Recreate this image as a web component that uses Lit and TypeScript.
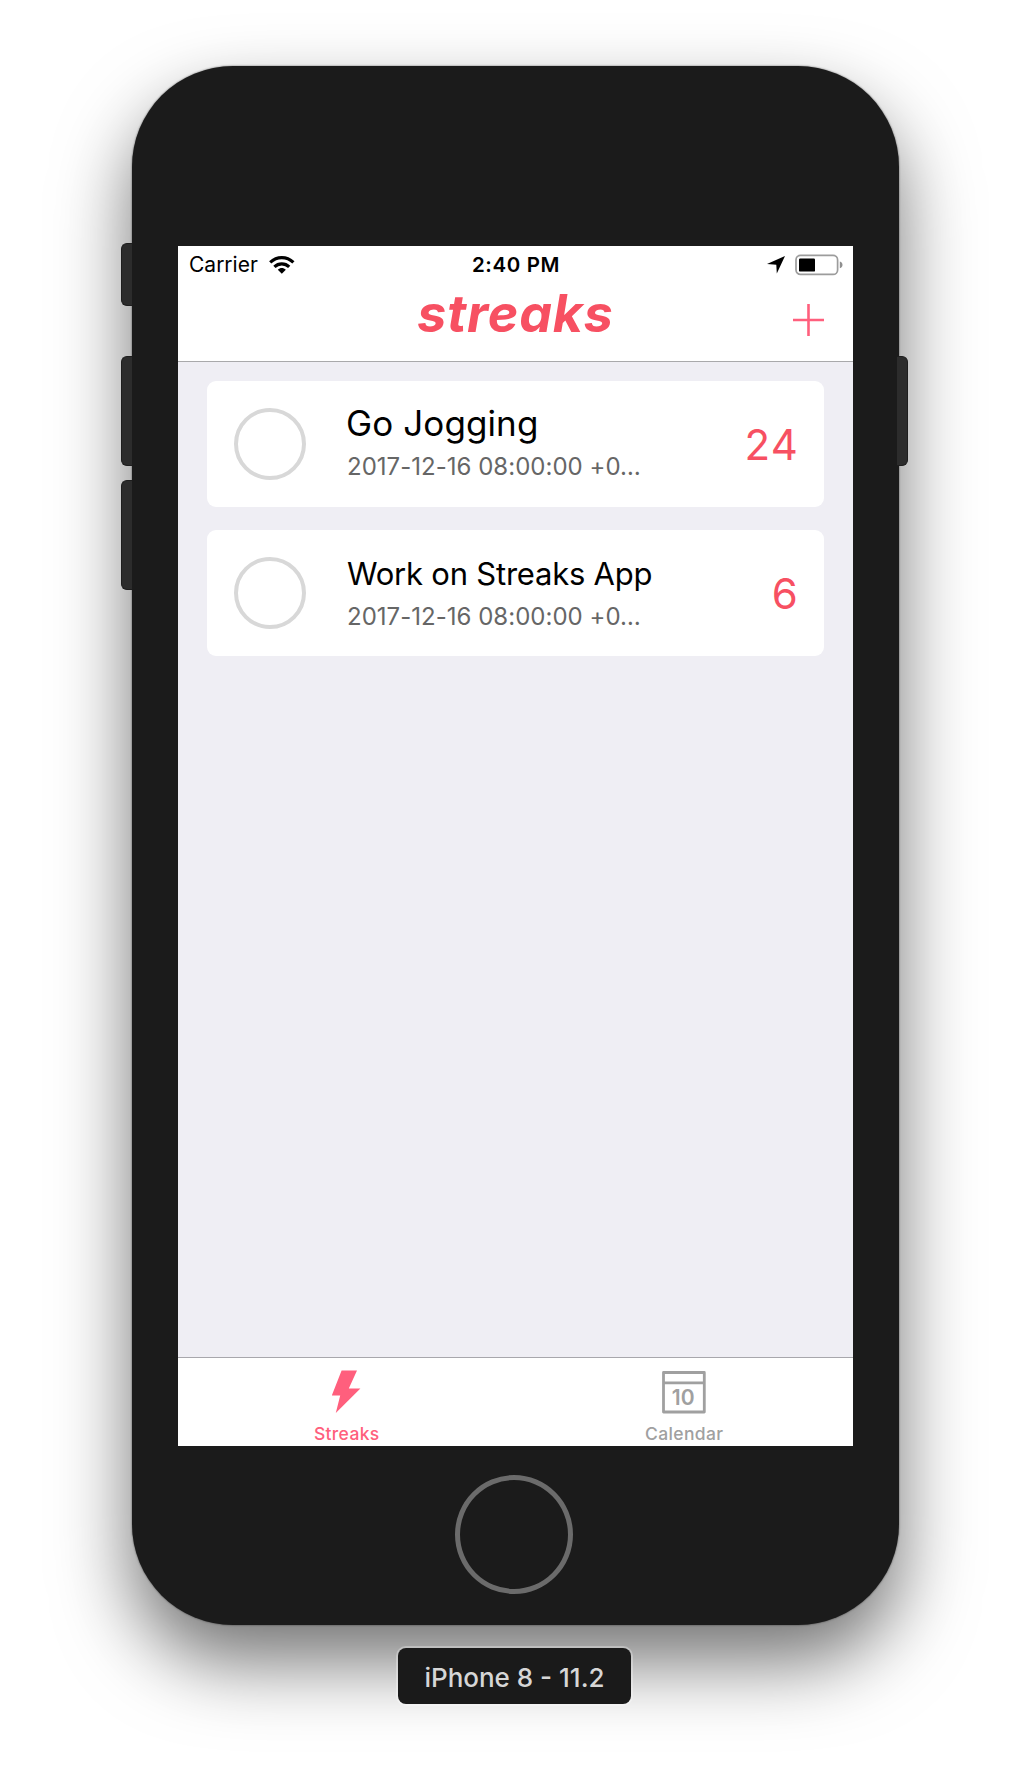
import { LitElement, html, css } from "lit";
import { customElement, property } from "lit/decorators.js";
import { classMap } from "lit/directives/class-map.js";

interface Streak {
  title: string;
  date: string;
  count: number;
  large?: boolean;
}

const STREAKS: Streak[] = [
  { title: "Go Jogging", date: "2017-12-16 08:00:00 +0…", count: 24, large: true },
  { title: "Work on Streaks App", date: "2017-12-16 08:00:00 +0…", count: 6 },
];

@customElement("status-bar")
export class StatusBar extends LitElement {
  static styles = css`
    :host {
      display: grid;
      grid-template-columns: 1fr auto 1fr;
      align-items: center;
      height: 36px;
      padding: 0 10px 0 11px;
      box-sizing: border-box;
      color: #000;
      font-family: Inter, "Liberation Sans", sans-serif;
      line-height: 38px;
    }
    .left, .right { display: flex; align-items: center; }
    .right { justify-content: flex-end; }
    .carrier { font-size: 21px; }
    .wifi { margin-left: 11px; }
    .time { font-size: 20.5px; font-weight: 600; letter-spacing: 0.6px; }
    .arrow { margin-right: 10px; }
    svg { display: block; }
  `;
  render() {
    return html`
      <div class="left">
        <span class="carrier">Carrier</span>
        <svg class="wifi" width="26" height="18" viewBox="0 0 26 18">
          <g fill="none" stroke="#000" stroke-width="3.2">
            <path d="M1.2 6.4C8 0.1 17.6 0.1 24.4 6.4" />
            <path d="M5.4 10.8C9.6 6.8 16 6.8 20.2 10.8" />
          </g>
          <path d="M8.8 13.7C11.2 11.5 14.4 11.5 16.8 13.7L12.8 17.8Z" />
        </svg>
      </div>
      <span class="time">2:40 PM</span>
      <div class="right">
        <svg class="arrow" width="18" height="18" viewBox="0 0 18 18">
          <path d="M18 0L9.8 17.6L9.3 8.8L0 8Z" />
        </svg>
        <svg width="48" height="22" viewBox="0 0 48 22">
          <rect x="1" y="1.4" width="41.6" height="19" rx="4.5" fill="none" stroke="#9c9c9c" stroke-width="1.7" />
          <rect x="4" y="4.4" width="16" height="13.2" rx="1.2" />
          <path d="M44.8 7.6C48.4 8.6 48.4 13.2 44.8 14.2Z" fill="#8f8f8f" />
        </svg>
      </div>
    `;
  }
}

@customElement("nav-header")
export class NavHeader extends LitElement {
  static styles = css`
    :host {
      display: grid;
      grid-template-columns: 1fr auto 1fr;
      height: 79px;
      padding: 0 29px;
      font-family: Inter, "Liberation Sans", sans-serif;
    }
    .title {
      grid-column: 2;
      font-size: 52px;
      font-style: italic;
      font-weight: 700;
      letter-spacing: 0.8px;
      line-height: 63px;
      color: #f75062;
    }
    .add { justify-self: end; margin-top: 22px; }
    svg { display: block; }
  `;
  render() {
    return html`
      <span class="title">streaks</span>
      <svg class="add" width="31" height="32" viewBox="0 0 31 32">
        <path d="M15.5 0V32M0 16H31" stroke="#ff5f7d" stroke-width="2.6" />
      </svg>
    `;
  }
}

@customElement("streak-card")
export class StreakCard extends LitElement {
  @property({ attribute: false }) streak!: Streak;

  static styles = css`
    :host { display: block; font-family: Inter, "Liberation Sans", sans-serif; }
    .card {
      display: flex;
      align-items: center;
      height: 126px;
      padding: 0 28px 0 27px;
      box-sizing: border-box;
      background: #fff;
      border-radius: 9px;
    }
    .check {
      flex: none;
      width: 72px;
      height: 72px;
      box-sizing: border-box;
      border: 4px solid #d8d8d8;
      border-radius: 50%;
    }
    .text { flex: 1; margin-left: 41px; white-space: nowrap; }
    .title { font-size: 31px; line-height: 44px; letter-spacing: -0.22px; padding-top: 3px; color: #000; }
    .title.large { font-size: 35px; letter-spacing: 0.1px; margin-left: -1px; padding: 1px 0; }
    .date { font-size: 24px; line-height: 42px; letter-spacing: 0.02px; color: #666; }
    .count { font-size: 42px; line-height: 50px; letter-spacing: 1.2px; margin-right: -3px; padding-top: 1px; color: #f75062; }
  `;
  render() {
    const s = this.streak;
    return html`
      <div class="card">
        <div class="check"></div>
        <div class="text">
          <div class=${classMap({ title: true, large: !!s.large })}>${s.title}</div>
          <div class="date">${s.date}</div>
        </div>
        <div class="count">${s.count}</div>
      </div>
    `;
  }
}

@customElement("tab-bar")
export class TabBar extends LitElement {
  static styles = css`
    :host {
      display: grid;
      grid-template-columns: 1fr 1fr;
      height: 89px;
      box-sizing: border-box;
      border-top: 1px solid #a8a7ac;
      background: #fff;
      font-family: Inter, "Liberation Sans", sans-serif;
    }
    .tab { display: flex; flex-direction: column; align-items: center; padding-top: 12px; color: #a0a0a0; }
    .tab.active { color: #ff5f7d; }
    .label { font-size: 17.5px; font-weight: 500; letter-spacing: 0.35px; line-height: 22px; margin-top: 9px; }
    svg { display: block; }
    .num { font: 600 21px Inter, sans-serif; }
  `;
  render() {
    return html`
      <div class="tab active">
        <svg width="30" height="44" viewBox="0 0 30 44">
          <path d="M9.6 0.4H25L16.8 18.4H28.4L3.8 43L8.2 25.6H-0.2Z" fill="currentColor" />
        </svg>
        <span class="label">Streaks</span>
      </div>
      <div class="tab">
        <svg width="44" height="44" viewBox="0 0 44 44">
          <path d="M1.5 2.5H42.3V42H1.5ZM1.5 12.8H42.3" fill="none" stroke="currentColor" stroke-width="2.8" stroke-linejoin="round" />
          <text class="num" x="21.2" y="35" text-anchor="middle" fill="currentColor">10</text>
        </svg>
        <span class="label">Calendar</span>
      </div>
    `;
  }
}

@customElement("app-root")
export class AppRoot extends LitElement {
  static styles = css`
    :host {
      display: block;
      height: 1788px;
      padding-top: 66px;
      box-sizing: border-box;
      overflow: hidden;
      background: #fff;
      font-family: Inter, "Liberation Sans", sans-serif;
    }
    .phone {
      position: relative;
      display: flex;
      flex-direction: column;
      align-items: center;
      width: 767px;
      height: 1559px;
      margin-left: 132px;
      padding-top: 180px;
      box-sizing: border-box;
      background: #1b1b1b;
      border-radius: 101px;
      box-shadow: 0 0 2px rgba(0, 0, 0, 0.6), 0 37px 76px rgba(0, 0, 0, 0.55);
    }
    .key {
      position: absolute;
      width: 11px;
      box-sizing: border-box;
      background: #2c2c2c;
      border: 1px solid #1e1e1e;
    }
    .key.l { left: -11px; border-right: 0; border-radius: 6px 0 0 6px; }
    .key.r { right: -9px; border-left: 0; border-radius: 0 6px 6px 0; }
    .mute { top: 177px; height: 63px; }
    .upper { top: 290px; height: 110px; }
    .lower { top: 414px; height: 110px; }
    .screen {
      display: flex;
      flex-direction: column;
      width: 675px;
      height: 1200px;
      background: #efeef4;
    }
    .top { background: #fff; border-bottom: 1px solid #a9a9ab; }
    .list {
      flex: 1;
      display: flex;
      flex-direction: column;
      gap: 23px;
      padding: 19px 29px;
    }
    .home {
      width: 118px;
      height: 119px;
      margin: 29px 3px 0 0;
      box-sizing: border-box;
      border: 5px solid #6b6b6b;
      border-radius: 50%;
    }
    .device {
      position: relative;
      width: 233px;
      height: 56px;
      margin: 23px 0 0 398px;
      background: #1a1a1a;
      border-radius: 8px;
      box-shadow: 0 0 0 2px rgba(255, 255, 255, 0.3);
      color: #d6d6d6;
      font-size: 26px;
      font-weight: 500;
      line-height: 60px;
      text-align: center;
    }
  `;
  render() {
    return html`
      <div class="phone">
        <div class="key l mute"></div>
        <div class="key l upper"></div>
        <div class="key l lower"></div>
        <div class="key r upper"></div>
        <div class="screen">
          <div class="top">
            <status-bar></status-bar>
            <nav-header></nav-header>
          </div>
          <div class="list">
            ${STREAKS.map((s) => html`<streak-card .streak=${s}></streak-card>`)}
          </div>
          <tab-bar></tab-bar>
        </div>
        <div class="home"></div>
      </div>
      <div class="device">iPhone 8 - 11.2</div>
    `;
  }
}
